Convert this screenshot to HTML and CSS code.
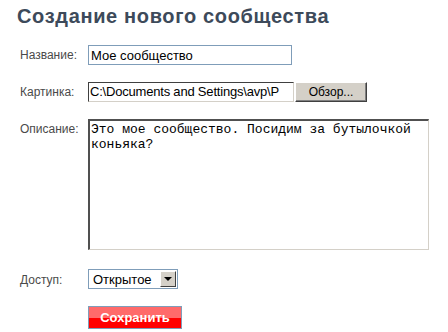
FILE: index.html
```html
<!DOCTYPE html>
<html lang="ru">
<head>
    <meta charset="UTF-8">
    <title>Создание нового сообщества</title>
    <link rel="stylesheet" href="styles.css">
</head>
<body>
    <div class="page">
        <h1 class="title">Создание нового сообщества</h1>

        <form class="form">
            <label class="label">Название:</label>
            <div class="field">
                <input class="text-input" type="text" value="Мое сообщество">
            </div>

            <label class="label">Картинка:</label>
            <div class="field file-field">
                <div class="file-box">C:\Documents and Settings\avp\P</div>
                <button type="button" class="file-btn">Обзор...</button>
            </div>

            <label class="label">Описание:</label>
            <div class="field">
                <div class="text-area">Это мое сообщество. Посидим за бутылочкой коньяка?</div>
            </div>

            <label class="label label-access">Доступ:</label>
            <div class="field field-access">
                <div class="select">
                    <span class="select-value">Открытое</span>
                    <span class="select-arrow"></span>
                </div>
            </div>

            <span></span>
            <div class="field">
                <div class="save-btn">Сохранить</div>
            </div>
        </form>
    </div>
</body>
</html>
```

FILE: styles.css
```css
/* General */
body {
    margin: 0;
    background: #fff;
    font-family: 'Liberation Sans', Arial, sans-serif;
}

.page {
    padding: 4px 0 0 17px;
}

.title {
    margin: 0;
    font-size: 20px;
    font-weight: bold;
    letter-spacing: 0.65px;
    color: #3d4a5a;
    line-height: 24px;
}

/* Form layout */
.form {
    display: grid;
    grid-template-columns: 68px 1fr;
    row-gap: 17px;
    margin-top: 17px;
    padding-left: 3px;
}

.label {
    font-size: 12px;
    color: #4a4a4a;
    padding-top: 3px;
}

.field {
    display: flex;
}

.label-access,
.field-access {
    margin-top: 2px;
}

.label-access {
    padding-top: 4px;
}

/* Text input */
.text-input {
    box-sizing: border-box;
    width: 204px;
    height: 20px;
    margin: 0;
    padding: 1px 2px;
    border: 1px solid #7f9db9;
    font-family: 'Liberation Sans', Arial, sans-serif;
    font-size: 13px;
    color: #000;
}

/* File input */
.file-box {
    box-sizing: border-box;
    width: 206px;
    height: 20px;
    padding: 1px 1px;
    border-style: solid;
    border-width: 1px;
    border-color: #404040 #d4d0c8 #d4d0c8 #404040;
    font-size: 13px;
    letter-spacing: -0.2px;
    line-height: 16px;
    white-space: nowrap;
}

.file-btn {
    box-sizing: border-box;
    width: 72px;
    height: 20px;
    margin: 0 0 0 1px;
    padding: 0;
    background: #d4d0c8;
    border-style: solid;
    border-width: 1px;
    border-color: #fff #404040 #404040 #fff;
    box-shadow: inset -1px -1px 0 #808080;
    font-family: 'Liberation Sans', Arial, sans-serif;
    font-size: 12px;
    color: #000;
}

/* Textarea */
.text-area {
    box-sizing: border-box;
    width: 341px;
    height: 131px;
    padding: 1px 0 0 1px;
    background: #fff;
    border-top: 2px solid #505050;
    border-left: 2px solid #505050;
    border-right: 1px solid #d4d0c8;
    border-bottom: 1px solid #d4d0c8;
    font-family: 'Liberation Mono', 'Courier New', monospace;
    font-size: 13px;
    line-height: 15px;
    color: #000;
    overflow: hidden;
}

/* Select */
.select {
    box-sizing: border-box;
    display: flex;
    align-items: center;
    width: 90px;
    height: 20px;
    border: 1px solid #7f9db9;
    background: #fff;
}

.select-value {
    flex: 1;
    padding-left: 4px;
    font-size: 13px;
    color: #000;
}

.select-arrow {
    position: relative;
    box-sizing: border-box;
    width: 16px;
    height: 16px;
    margin-right: 1px;
    background: #d4d0c8;
    border-style: solid;
    border-width: 1px;
    border-color: #fff #404040 #404040 #fff;
}

.select-arrow::after {
    content: "";
    position: absolute;
    left: 3px;
    top: 5px;
    border-left: 4px solid transparent;
    border-right: 4px solid transparent;
    border-top: 4px solid #000;
}

/* Save button */
.save-btn {
    box-sizing: border-box;
    width: 94px;
    height: 23px;
    border: 1px solid #7f9db9;
    background: linear-gradient(#ff6a6a 0, #ff6a6a 50%, #ff0000 50%, #ff0000 100%);
    color: #fff;
    font-size: 13px;
    font-weight: bold;
    line-height: 21px;
    text-align: center;
}
```
